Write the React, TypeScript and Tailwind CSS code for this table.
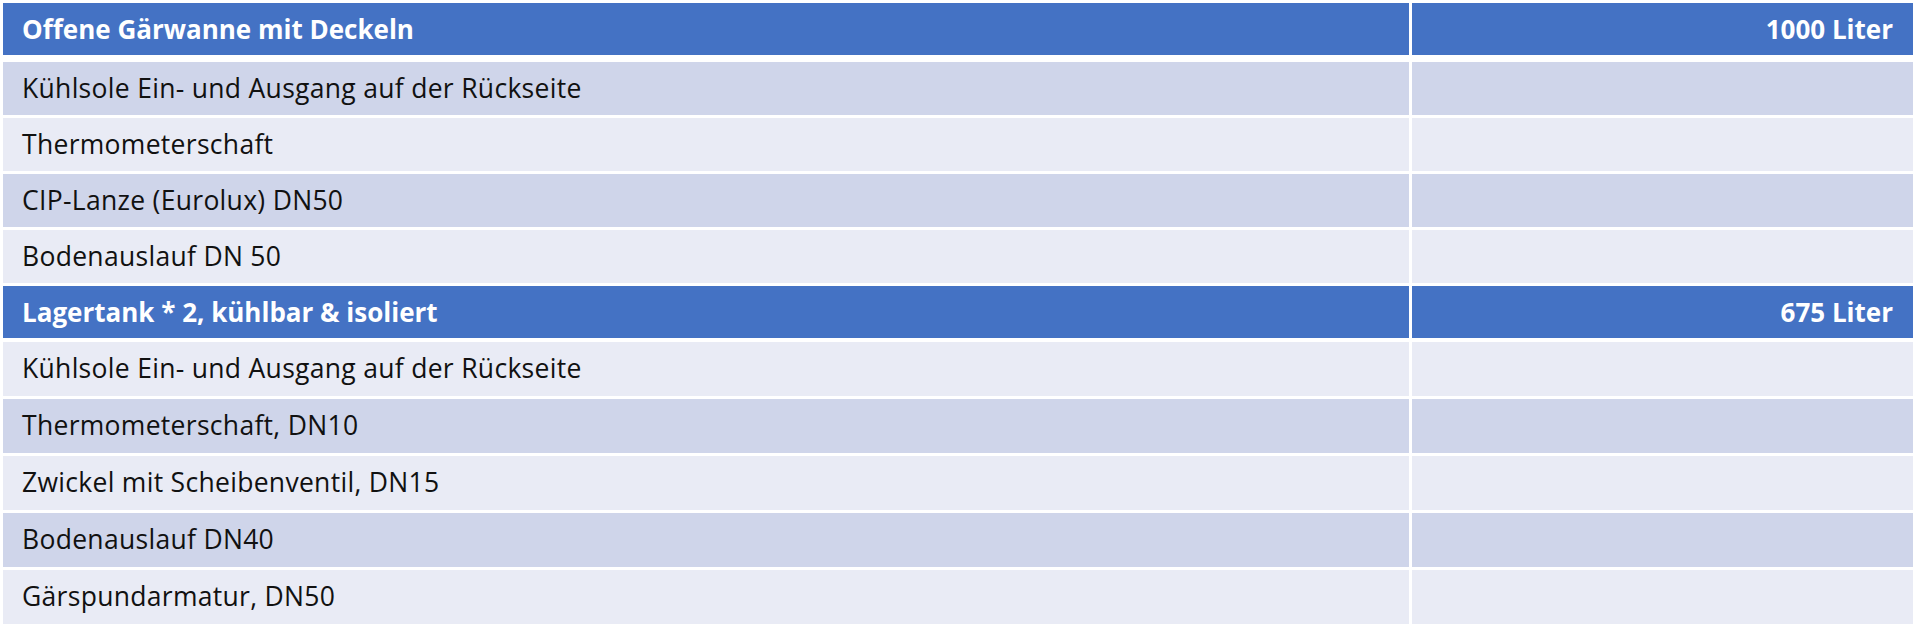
const sections = [
  {
    title: "Offene Gärwanne mit Deckeln",
    volume: "1000 Liter",
    rowH: "h-[53px]",
    items: [
      "Kühlsole Ein- und Ausgang auf der Rückseite",
      "Thermometerschaft",
      "CIP-Lanze (Eurolux) DN50",
      "Bodenauslauf DN 50",
    ],
  },
  {
    title: "Lagertank * 2, kühlbar & isoliert",
    volume: "675 Liter",
    rowH: "h-[54px]",
    items: [
      "Kühlsole Ein- und Ausgang auf der Rückseite",
      "Thermometerschaft, DN10",
      "Zwickel mit Scheibenventil, DN15",
      "Bodenauslauf DN40",
      "Gärspundarmatur, DN50",
    ],
  },
];

function HeaderRow({ title, volume }: { title: string; volume: string }) {
  return (
    <div className="grid h-[52px] grid-cols-[1406px_501px] gap-x-[3px] text-[26px] font-bold text-white">
      <div className="flex items-center bg-[#4472c4] pl-[19px]">{title}</div>
      <div className="flex items-center justify-end bg-[#4472c4] pr-[20px]">{volume}</div>
    </div>
  );
}

function ItemRow({ label, shade, height }: { label: string; shade: boolean; height: string }) {
  const bg = shade ? "bg-[#cfd5ea]" : "bg-[#e9ebf5]";
  return (
    <div className={`grid grid-cols-[1406px_501px] gap-x-[3px] text-[26.5px] tracking-[0.3px] text-[#111] ${height}`}>
      <div className={`flex items-center pl-[19px] ${bg}`}>{label}</div>
      <div className={bg} />
    </div>
  );
}

export default function App() {
  // banding runs across the whole table, header rows included
  let rowIndex = 0;
  return (
    <div className="min-h-[635px] bg-white pl-[3px] pt-[3px] font-['Open_Sans',sans-serif]">
      {sections.map((s, i) => {
        rowIndex++;
        return (
          <div key={s.title} className={i === 0 ? "" : "mt-[3px]"}>
            <HeaderRow title={s.title} volume={s.volume} />
            <div className={`flex flex-col gap-[3px] ${i === 0 ? "mt-[7px]" : "mt-[4px]"}`}>
              {s.items.map((item) => {
                const shade = rowIndex % 2 === 1;
                rowIndex++;
                return <ItemRow key={item} label={item} shade={shade} height={s.rowH} />;
              })}
            </div>
          </div>
        );
      })}
    </div>
  );
}
